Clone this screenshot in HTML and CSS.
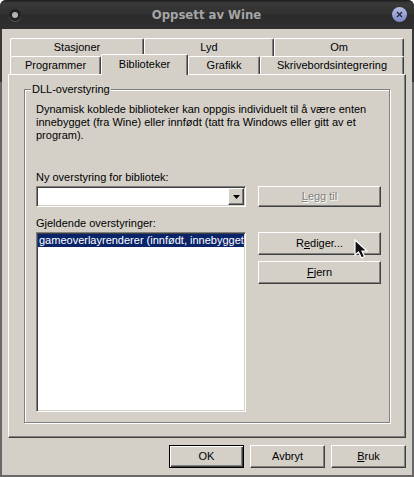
FILE: index.html
```html
<!DOCTYPE html>
<html lang="nb">
<head>
    <meta charset="UTF-8">
    <meta name="viewport" content="width=device-width, initial-scale=1.0">
    <title>Oppsett av Wine</title>
    <link rel="stylesheet" href="styles.css">
</head>
<body>
    <div class="window">
        <header class="titlebar">
            <button class="menu-button" aria-label="Vindusmeny"></button>
            <h1 class="title">Oppsett av Wine</h1>
            <button class="close-button" aria-label="Lukk">
                <svg width="7" height="7" viewBox="0 0 7 7"><path d="M1 1L6 6M6 1L1 6" stroke="#23263c" stroke-width="1.3"/></svg>
            </button>
        </header>

        <main class="content">
            <div class="tabs" role="tablist">
                <div class="tab-row">
                    <button class="tab" role="tab">Stasjoner</button>
                    <button class="tab" role="tab">Lyd</button>
                    <button class="tab" role="tab">Om</button>
                </div>
                <div class="tab-row tab-row-front">
                    <button class="tab" role="tab">Programmer</button>
                    <button class="tab active" role="tab" aria-selected="true">Biblioteker</button>
                    <button class="tab" role="tab">Grafikk</button>
                    <button class="tab" role="tab">Skrivebordsintegrering</button>
                </div>
            </div>

            <div class="panel" role="tabpanel">
                <fieldset class="group">
                    <legend>DLL-overstyring</legend>
                    <p class="description">Dynamisk koblede biblioteker kan oppgis individuelt til å være enten innebygget (fra Wine) eller innfødt (tatt fra Windows eller gitt av et program).</p>

                    <label for="library">Ny overstyring for bibliotek:</label>
                    <div class="row">
                        <div class="combo">
                            <select id="library"><option></option></select>
                            <span class="combo-arrow">
                                <svg width="7" height="4" viewBox="0 0 7 4"><path d="M0 0H7L3.5 4Z"/></svg>
                            </span>
                        </div>
                        <button class="button add-button" disabled><u>L</u>egg til</button>
                    </div>

                    <label for="overrides">Gjeldende overstyringer:</label>
                    <div class="row list-row">
                        <select class="list" id="overrides" size="8">
                            <option selected>gameoverlayrenderer (innfødt, innebygget)</option>
                        </select>
                        <div class="side-buttons">
                            <button class="button edit-button">R<u>e</u>diger...
                                <svg class="pointer" width="14" height="20" viewBox="0 0 14 20"><path d="M1 1V16L4.500 13L7.500 19L10.500 17.500L8 12H13Z" fill="#111" stroke="#fff" stroke-width="1.2"/></svg>
                            </button>
                            <button class="button"><u>F</u>jern</button>
                        </div>
                    </div>
                </fieldset>
            </div>

            <footer class="actions">
                <button class="button default">OK</button>
                <button class="button">Avbryt</button>
                <button class="button"><u>B</u>ruk</button>
            </footer>
        </main>
    </div>
</body>
</html>
```
FILE: styles.css
```css
* {
    box-sizing: border-box;
}
body {
    margin: 0;
    background-color: #fff;
    color: #000;
    font-family: "Liberation Sans", Arial, sans-serif;
    font-size: 11px;
    line-height: 13px;
}
button, select {
    margin: 0;
    padding: 0;
    border: none;
    border-radius: 0;
    color: inherit;
    font: inherit;
    outline: none;
}
.window {
    min-height: 100vh;
    display: flex;
    flex-direction: column;
    padding: 0 2px 2px;
    background: linear-gradient(#383838 82px, #686868 82px);
    border-radius: 6px 6px 0 0;
    overflow: hidden;
}

/* title bar */
.titlebar {
    display: flex;
    align-items: center;
    justify-content: space-between;
    height: 29px;
    margin: 0 -2px;
    padding: 0 7px 0 9px;
    background: linear-gradient(#1c1c1c, #3a3a3a 3px, #303030 14px, #2b2b2b 15px, #303030);
}
.title {
    margin: 0;
    color: #a6a6a6;
    font-family: "DejaVu Sans Condensed", "DejaVu Sans", sans-serif;
    font-size: 13px;
    font-weight: bold;
    line-height: 16px;
}
.menu-button {
    width: 12px;
    height: 12px;
    border: 3px solid #222;
    border-radius: 50%;
    background-color: #b4b4b4;
    box-shadow: 0 1px 0 #555;
}
.close-button {
    display: flex;
    align-items: center;
    justify-content: center;
    width: 15px;
    height: 15px;
    border-radius: 50%;
    background: linear-gradient(#b8bce4, #7f87c4);
}

.content {
    flex: 1;
    display: flex;
    flex-direction: column;
    padding: 9px 6px 7px;
    background-color: #d4d0c8;
}

/* tabs */
.tabs {
    padding: 0 2px;
}
.tab-row {
    display: grid;
    grid-template-columns: 134fr 130fr 130fr;
    height: 18px;
}
.tab-row-front {
    grid-template-columns: 91fr 87fr 72fr 144fr;
}
.tab {
    border-top: 1px solid #fff;
    border-left: 1px solid #fff;
    border-right: 1px solid #404040;
    border-radius: 2px 2px 0 0;
    box-shadow: inset -1px 0 #808080;
    background-color: #d4d0c8;
    white-space: nowrap;
}
.active {
    z-index: 1;
    margin: -2px 0 -1px;
    padding-bottom: 2px;
}
.panel {
    flex: 1;
    display: flex;
    padding: 8px 15px 14px;
    border: 1px solid;
    border-color: #fff #404040 #404040 #fff;
    box-shadow: inset -1px -1px #808080;
}

/* etched group box */
.group {
    flex: 1;
    min-width: 0;
    display: flex;
    flex-direction: column;
    margin: 0;
    padding: 7px 8px 10px 11px;
    border: 1px solid #808080;
    box-shadow: 1px 1px #fff, inset 1px 1px #fff;
}
.group legend {
    margin-left: -5px;
    padding: 0 1px;
    background-color: #d4d0c8;
}
.description {
    margin: 0 0 29px;
}
.row {
    display: flex;
    align-items: flex-start;
    gap: 12px;
    margin: 2px 0 10px;
}
.combo, .list {
    flex: 1 1 0;
    min-width: 0;
    border: 1px solid;
    border-color: #808080 #fff #fff #808080;
    background-color: #fff;
    box-shadow: inset 1px 1px #404040, inset -1px -1px #d4d0c8;
}
.combo {
    position: relative;
    height: 21px;
}
.combo select {
    width: 100%;
    height: 100%;
    padding: 0 20px 0 4px;
    appearance: none;
    background-color: transparent;
}
.combo-arrow {
    position: absolute;
    top: 1px;
    right: 1px;
    bottom: 1px;
    display: flex;
    align-items: center;
    justify-content: center;
    width: 16px;
    border: 1px solid;
    border-color: #fff #404040 #404040 #fff;
    background-color: #d4d0c8;
    box-shadow: inset -1px -1px #808080;
    pointer-events: none;
}
.list-row {
    flex: 1;
    margin-bottom: 0;
}
.list {
    align-self: stretch;
    padding: 1px;
    overflow: hidden;
    scrollbar-width: none;
}
.list option {
    min-height: 13px;
    padding: 0 1px;
}
.list option:checked {
    background: #0a246a linear-gradient(#0a246a, #0a246a);
    color: #fff;
    -webkit-text-fill-color: #fff;
}

/* push buttons */
.button {
    width: 75px;
    height: 23px;
    border: 1px solid;
    border-color: #fff #404040 #404040 #fff;
    background-color: #d4d0c8;
    box-shadow: inset -1px -1px #808080;
}
.button:disabled, .button:disabled u {
    color: #808080;
    text-shadow: 1px 1px #fff;
}
.row .button {
    width: 123px;
}
.row .add-button {
    height: 21px;
}
.side-buttons {
    display: flex;
    flex-direction: column;
    gap: 6px;
}
.edit-button {
    position: relative;
}
.pointer {
    position: absolute;
    top: 6px;
    right: 12px;
}
.default {
    border-color: #000;
    box-shadow: inset 1px 1px #fff, inset -1px -1px #404040, inset -2px -2px #808080;
}
.actions {
    display: flex;
    justify-content: flex-end;
    gap: 6px;
    margin-top: 7px;
}
```
